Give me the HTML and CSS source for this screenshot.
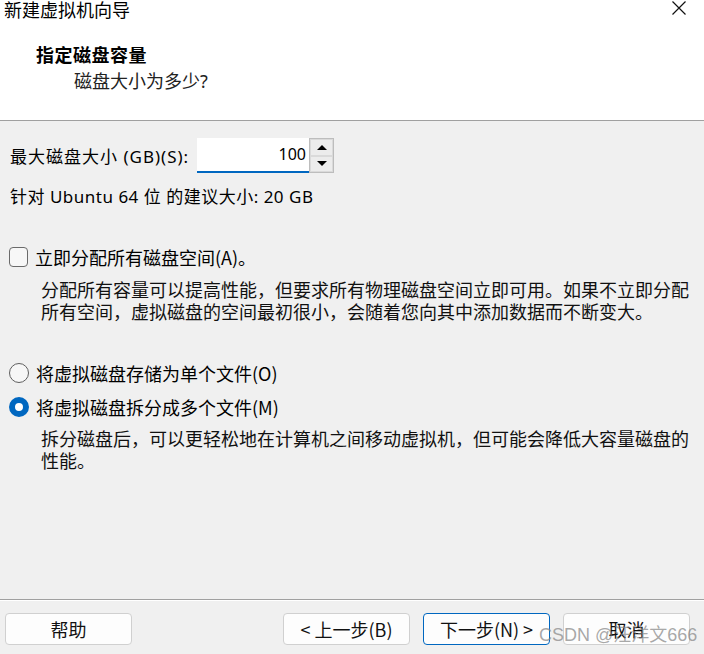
FILE: index.html
```html
<!DOCTYPE html>
<html lang="zh-CN">
<head>
    <meta charset="UTF-8">
    <meta name="viewport" content="width=device-width, initial-scale=1.0">
    <title>新建虚拟机向导</title>
    <link rel="stylesheet" href="styles.css">
</head>
<body>
    <div class="dialog">

        <header class="top">
            <div class="titlebar">
                <span class="title">新建虚拟机向导</span>
                <svg class="close" width="14" height="14" viewBox="0 0 14 14">
                    <path d="M0.5 0.5 L13.5 13.5 M13.5 0.5 L0.5 13.5" stroke="#111" stroke-width="1.2" fill="none"/>
                </svg>
            </div>
            <h1 class="heading">指定磁盘容量</h1>
            <p class="subheading">磁盘大小为多少?</p>
        </header>

        <main class="content">
            <div class="size-row">
                <label class="size-label">最大磁盘大小 (GB)(S):</label>
                <div class="spin">
                    <div class="spin-input">100</div>
                    <div class="spin-btns">
                        <div class="spin-btn"><span class="arrow up"></span></div>
                        <div class="spin-btn"><span class="arrow down"></span></div>
                    </div>
                </div>
            </div>

            <p class="hint">针对 Ubuntu 64 位 的建议大小: 20 GB</p>

            <div class="option first">
                <span class="checkbox"></span>
                <span class="option-label">立即分配所有磁盘空间(A)。</span>
            </div>
            <p class="desc">分配所有容量可以提高性能，但要求所有物理磁盘空间立即可用。如果不立即分配所有空间，虚拟磁盘的空间最初很小，会随着您向其中添加数据而不断变大。</p>

            <div class="option radio-one">
                <span class="radio"></span>
                <span class="option-label">将虚拟磁盘存储为单个文件(O)</span>
            </div>
            <div class="option radio-two">
                <span class="radio checked"></span>
                <span class="option-label">将虚拟磁盘拆分成多个文件(M)</span>
            </div>
            <p class="desc desc-split">拆分磁盘后，可以更轻松地在计算机之间移动虚拟机，但可能会降低大容量磁盘的性能。</p>
        </main>

        <footer class="bottom">
            <button class="btn">帮助</button>
            <div class="spacer"></div>
            <button class="btn">&lt; 上一步(B)</button>
            <button class="btn default">下一步(N) &gt;</button>
            <button class="btn">取消</button>
            <span class="watermark">CSDN @汪洋文666</span>
        </footer>

    </div>
</body>
</html>
```

FILE: styles.css
```css
* {
    box-sizing: border-box;
}

body {
    margin: 0;
    font-family: "Noto Sans CJK SC", "Noto Sans", sans-serif;
    color: #000;
    background-color: #f0f0f0;
}

.dialog {
    width: 704px;
    height: 654px;
    display: flex;
    flex-direction: column;
    position: relative;
    overflow: hidden;
}

/* top white area */
.top {
    height: 121px;
    background-color: #fff;
    border-bottom: 1px solid #a0a0a0;
}

.titlebar {
    display: flex;
    justify-content: space-between;
    align-items: flex-start;
    height: 20px;
    padding: 0 18px 0 4px;
}

.title {
    font-size: 18px;
    line-height: 19px;
}

.close {
    margin-top: 1px;
}

.heading {
    margin: 23px 0 0 36px;
    font-size: 18px;
    line-height: 22px;
    font-weight: bold;
    letter-spacing: 0.5px;
}

.subheading {
    margin: 5px 0 0 74px;
    font-family: "Noto Sans", "Noto Sans CJK SC", sans-serif;
    font-size: 18px;
    line-height: 22px;
    color: #222;
}

/* grey body */
.content {
    flex: 1;
    padding: 0 10px 0 9px;
}

.size-row {
    display: flex;
    align-items: center;
    margin-top: 17px;
    height: 35px;
}

.size-label {
    font-family: "Noto Sans", "Noto Sans CJK SC", sans-serif;
    font-size: 17px;
    letter-spacing: 1px;
    margin-left: 1px;
    width: 187px;
    white-space: nowrap;
}

.spin {
    display: flex;
    height: 35px;
}

.spin-input {
    width: 112px;
    background-color: #fff;
    border-bottom: 2px solid #0067c0;
    text-align: right;
    font-family: "Noto Sans", sans-serif;
    font-size: 16px;
    line-height: 33px;
    padding-right: 3px;
}

.spin-btns {
    width: 25px;
    display: flex;
    flex-direction: column;
    border: 1px solid #bdbdbd;
    background-color: #f0f0f0;
}

.spin-btn {
    flex: 1;
    display: flex;
    align-items: center;
    justify-content: center;
    border: 1px solid #dadada;
    background-color: #ececec;
}

.arrow {
    width: 0;
    height: 0;
    border-left: 5px solid transparent;
    border-right: 5px solid transparent;
}

.arrow.up {
    border-bottom: 5px solid #000;
}

.arrow.down {
    border-top: 5px solid #000;
}

.hint {
    margin: 14px 0 0 1px;
    font-family: "Noto Sans", "Noto Sans CJK SC", sans-serif;
    font-size: 17px;
    letter-spacing: 0.5px;
    line-height: 20px;
}

.option {
    display: flex;
    align-items: center;
    gap: 7px;
    height: 20px;
}

.option.first {
    margin-top: 40px;
}

.option.radio-one {
    margin-top: 41px;
}

.option.radio-two {
    margin-top: 14px;
}

.option-label {
    font-size: 18px;
    line-height: 20px;
}

.checkbox {
    width: 19px;
    height: 20px;
    border: 1.5px solid #6a6a6a;
    border-radius: 4px;
    background-color: #f7f7f7;
}

.radio {
    width: 20px;
    height: 20px;
    border: 1.5px solid #5f5f5f;
    border-radius: 50%;
    background-color: #f7f7f7;
}

.radio.checked {
    border: 6px solid #0067c0;
    background-color: #fff;
}

.desc {
    margin: 11px 0 0 32px;
    font-size: 18px;
    line-height: 22px;
    color: #111;
}

.desc-split {
    margin-top: 10px;
}

/* buttons */
.bottom {
    height: 55px;
    display: flex;
    align-items: flex-start;
    gap: 13px;
    padding: 13px 14px 0 5px;
    border-top: 1px solid #a0a0a0;
    box-shadow: inset 0 1px 0 #fff;
}

.spacer {
    flex: 1;
}

.btn {
    width: 127px;
    height: 32px;
    background-color: #fdfdfd;
    border: 1px solid #d0d0d0;
    border-radius: 4px;
    font-family: "Noto Sans CJK SC", "Noto Sans", sans-serif;
    font-size: 18px;
    line-height: 28px;
    color: #111;
    padding: 0;
}

.btn.default {
    border-color: #0067c0;
}

.watermark {
    position: absolute;
    left: 539px;
    bottom: 8px;
    font-family: "Liberation Sans", "Noto Sans CJK SC", sans-serif;
    font-size: 18px;
    color: rgba(130, 130, 130, 0.7);
}
```
